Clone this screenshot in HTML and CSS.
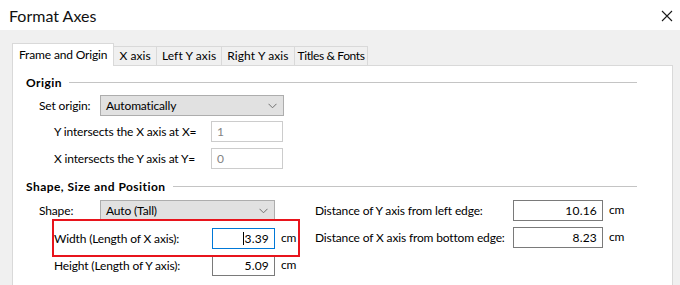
FILE: index.html
```html
<!DOCTYPE html>
<html lang="en">
<head>
  <meta charset="UTF-8">
  <title>Format Axes</title>
  <link rel="stylesheet" href="styles.css">
</head>
<body>

  <div class="titlebar">
    <span class="title">Format Axes</span>
    <svg class="close" width="12" height="12" viewBox="0 0 12 12">
      <path d="M1 1 L11 11 M11 1 L1 11" stroke="#1a1a1a" stroke-width="1.1" fill="none"/>
    </svg>
  </div>

  <div class="dialog">
    <div class="tabs">
      <div class="tab active">Frame and Origin</div>
      <div class="tab">X axis</div>
      <div class="tab">Left Y axis</div>
      <div class="tab">Right Y axis</div>
      <div class="tab">Titles &amp; Fonts</div>
    </div>

    <div class="panel">
      <!-- Origin -->
      <div class="group-title first">Origin</div>
      <div class="row lvl1">
        <span class="lbl lbl-set">Set origin:</span>
        <div class="select select-origin">Automatically
          <svg class="chev" width="9" height="6" viewBox="0 0 9 6"><path d="M0.5 0.8 L4.5 4.8 L8.5 0.8" stroke="#707070" stroke-width="1" fill="none"/></svg>
        </div>
      </div>
      <div class="row lvl2">
        <span class="lbl lbl-intersect">Y intersects the X axis at X=</span>
        <div class="field disabled f-intersect">1</div>
      </div>
      <div class="row lvl2 gap6">
        <span class="lbl lbl-intersect">X intersects the Y axis at Y=</span>
        <div class="field disabled f-intersect">0</div>
      </div>

      <!-- Shape -->
      <div class="group-title">Shape, Size and Position</div>
      <div class="shape-grid">
        <div class="col-left">
          <div class="row lvl1 gap6">
            <span class="lbl lbl-set">Shape:</span>
            <div class="select select-shape">Auto (Tall)
              <svg class="chev" width="9" height="6" viewBox="0 0 9 6"><path d="M0.5 0.8 L4.5 4.8 L8.5 0.8" stroke="#707070" stroke-width="1" fill="none"/></svg>
            </div>
          </div>
          <div class="row lvl2 gap7 marked">
            <span class="lbl lbl-size">Width (Length of X axis):</span>
            <div class="field num focus f-size"><span class="caret"></span>3.39</div>
            <span class="unit">cm</span>
          </div>
          <div class="row lvl2 gap6">
            <span class="lbl lbl-size">Height (Length of Y axis):</span>
            <div class="field num f-size">5.09</div>
            <span class="unit">cm</span>
          </div>
        </div>
        <div class="col-right">
          <div class="row gap6">
            <span class="lbl lbl-dist">Distance of Y axis from left edge:</span>
            <div class="field num f-dist">10.16</div>
            <span class="unit">cm</span>
          </div>
          <div class="row gap6">
            <span class="lbl lbl-dist">Distance of X axis from bottom edge:</span>
            <div class="field num f-dist">8.23</div>
            <span class="unit">cm</span>
          </div>
        </div>
      </div>
    </div>
  </div>

</body>
</html>
```

FILE: styles.css
```css
html, body {
  height: 100%;
  overflow: hidden;
}
body {
  margin: 0;
  font-family: 'Lato', 'Liberation Sans', sans-serif;
  font-size: 12px;
  letter-spacing: -0.15px;
  color: #000;
  background: #f0f0f0;
}
.titlebar {
  height: 30px;
  background: #fff;
  display: flex;
  align-items: center;
  justify-content: space-between;
  padding: 0 7px 0 9px;
}
.title {
  font-size: 16px;
  letter-spacing: 0;
  color: #111;
}
.close {
  margin-top: 1px;
}

/* Tabs */
.tabs {
  display: flex;
  align-items: flex-end;
  padding-left: 12px;
  margin-top: 13px;
}
.tab {
  height: 18px;
  line-height: 18px;
  padding: 0 5px;
  border: 1px solid #d9d9d9;
  border-bottom: none;
  background: #f0f0f0;
  margin-left: -1px;
  white-space: nowrap;
  letter-spacing: 0.1px;
}
.tab:last-child {
  padding: 0 3px;
  letter-spacing: -0.4px;
}
.tab.active {
  height: 22px;
  line-height: 21px;
  padding: 0 6px;
  margin-left: 0;
  margin-bottom: -1px;
  background: #fff;
  letter-spacing: -0.15px;
  position: relative;
  z-index: 1;
}
.dialog {
  height: 255px;
  overflow: hidden;
}
.panel {
  margin: 0 7px 0 12px;
  height: 240px;
  background: #fff;
  border: 1px solid #d9d9d9;
  padding-right: 35px;
}

/* Group headings */
.group-title {
  display: flex;
  align-items: center;
  height: 16px;
  margin: 9px 0 0 13px;
  font-weight: bold;
  letter-spacing: 0.45px;
}
.group-title.first {
  margin-top: 8px;
}
.group-title::after {
  content: "";
  flex: 1;
  border-top: 1px solid #c4c4c4;
  margin-left: 7px;
}

/* Rows */
.row {
  display: flex;
  align-items: center;
  height: 21px;
  margin-top: 5px;
}
.row.gap6 { margin-top: 6px; }
.row.gap7 { margin-top: 7px; }
.lvl1 { padding-left: 26px; }
.lvl2 { padding-left: 41px; }
.lbl { white-space: nowrap; }
.lbl-set { width: 61px; }
.lbl-intersect { width: 157px; }
.lbl-size { width: 158px; }
.lbl-dist { width: 198px; }

.select {
  box-sizing: border-box;
  height: 21px;
  display: flex;
  align-items: center;
  justify-content: space-between;
  padding: 0 6px 0 5px;
  background: #e1e1e1;
  border: 1px solid #adadad;
}
.select-origin { width: 184px; }
.select-shape { width: 175px; }

.field {
  box-sizing: border-box;
  height: 21px;
  display: flex;
  align-items: center;
  padding: 0 5px;
  background: #fff;
  border: 1px solid #7a7a7a;
}
.field.disabled {
  border-color: #cccccc;
  color: #838383;
}
.field.num {
  justify-content: flex-end;
  letter-spacing: 0.2px;
}
.field.focus {
  border-color: #0078d7;
}
.caret {
  width: 1px;
  height: 13px;
  background: #000;
}
.f-intersect { width: 72px; }
.f-size { width: 63px; }
.f-dist { width: 90px; }
.unit {
  margin-left: 6px;
  margin-top: -2px;
}

/* Shape section columns */
.shape-grid {
  display: grid;
  grid-template-columns: 302px auto;
}

/* Red annotation box around the width row */
.marked {
  position: relative;
}
.marked::after {
  content: "";
  position: absolute;
  left: 39px;
  top: -9px;
  width: 244px;
  height: 34px;
  border: 2px solid #e8141c;
}
```
